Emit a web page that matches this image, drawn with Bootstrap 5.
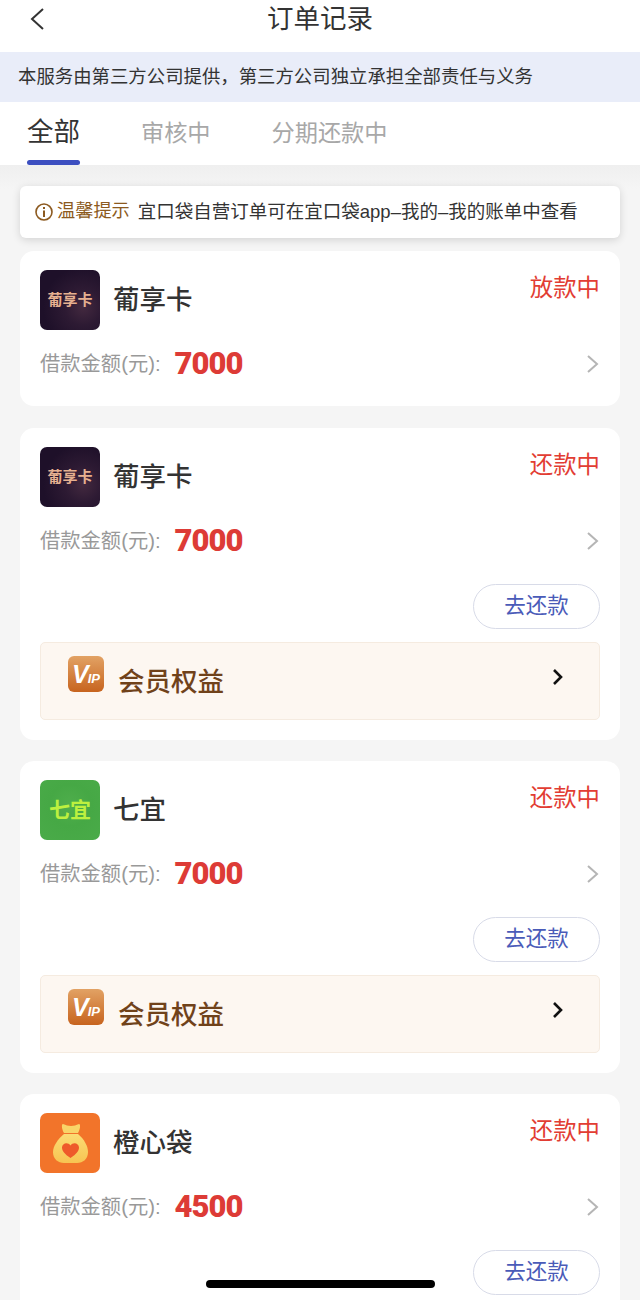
<!DOCTYPE html>
<html lang="zh-CN">
<head>
  <meta charset="UTF-8" />
  <meta name="viewport" content="width=device-width, initial-scale=1.0"/>
  <title>订单记录</title>
  <link href="https://cdn.jsdelivr.net/npm/bootstrap@5.3.3/dist/css/bootstrap.min.css" rel="stylesheet">
  <style>
    html, body { height: 1300px; overflow: hidden; }
    body { width: 640px; background: #f5f5f5; font-family: "Liberation Sans", "Noto Sans CJK SC", sans-serif; color: #333; position: relative; }
    .top-bar { height: 52px; background: #fff; }
    .top-bar h1 { font-size: 26.5px; font-weight: 400; margin: 0; line-height: 38px; color: #333; }
    .back-btn { left: 29px; top: 7px; line-height: 0; }
    .notice { height: 50px; background: #e9edf9; font-size: 18.4px; padding-left: 18px; color: #333; }
    .tab-bar { height: 63px; background: #fff; padding-left: 27px; gap: 61px; }
    .tab-item { font-size: 23.2px; color: #a8a8a8; line-height: 63px; height: 63px; position: relative; }
    .tab-item.on { font-size: 26.5px; color: #333; line-height: 60px; }
    .tab-item.on::after { content: ""; position: absolute; left: 0; right: 0; bottom: 0; height: 5px; border-radius: 3px; background: #3c4fc0; }
    .list-wrap { padding: 21px 20px 0; background: linear-gradient(#efefef, #f5f5f5 24px); }
    .tip-box { height: 52px; background: #fff; border-radius: 6px; box-shadow: 0 2px 8px rgba(0,0,0,.14); padding-left: 14px; margin-bottom: 13px; font-size: 18.5px; color: #333; }
    .tip-label { color: #8c5a20; margin: 0 8px 0 3px; font-size: 18.2px; }
    .order-item { background: #fff; border-radius: 14px; padding: 19px 20px 20px; margin-bottom: 21px; }
    .order-solo { padding-bottom: 25px; margin-bottom: 22px; }
    .logo-box { width: 60px; height: 60px; border-radius: 7px; flex: none; overflow: hidden; }
    .logo-pu { background: radial-gradient(circle at 72% 62%, #43293f 0, #2d1a33 32%, #1e1029 70%); color: #e6b090; font-size: 15px; font-weight: 700; }
    .logo-qi { background: radial-gradient(circle at 50% 42%, #4fae4c 0, #46a845 45%, #4aab49 100%); color: #bdf03f; font-size: 21px; font-weight: 700; }
    .logo-cheng { background: #f2742a; }
    .prod-name { font-size: 26.5px; font-weight: 500; margin-left: 13px; line-height: 60px; color: #333; }
    .state-txt { font-size: 23.4px; color: #e23d33; line-height: 36px; }
    .amount-row { height: 34px; margin-top: 17px; }
    .amount-label { font-size: 20.3px; color: #999; }
    .amount-num { font-family: Roboto, "Liberation Sans", sans-serif; font-size: 31px; font-weight: 900; color: #dd3b36; margin-left: 14px; line-height: 34px; letter-spacing: -1px; }
    .btn-repay { width: 127px; height: 45px; border: 1px solid #d8dbe8; border-radius: 23px; background: #fff; color: #4a5bb8; font-size: 21.5px; padding: 0; line-height: 41px; }
    .repay-row { margin-top: 26px; }
    .vip-box { height: 78px; margin-top: 13px; background: #fdf7f1; border: 1px solid #f5ebe0; border-radius: 5px; padding: 13px 0 0 27px; }
    .vip-badge { width: 36px; height: 36px; border-radius: 6px; background: linear-gradient(#e2a264, #c7641f); flex: none; color: #fff; font-family: "Liberation Sans", sans-serif; font-style: italic; font-weight: 700; padding-left: 4px; line-height: 36px; overflow: hidden; white-space: nowrap; }
    .vip-v { font-size: 25px; letter-spacing: -1px; }
    .vip-p { font-size: 13px; }
    .vip-name { font-size: 26.5px; font-weight: 500; color: #70421a; margin-left: 14px; line-height: 44px; margin-top: 4px; }
    .vip-arrow { margin: 11px 34px 0 auto; }
    .home-bar { position: absolute; left: 206px; top: 1280px; width: 229px; height: 8px; border-radius: 4px; background: #000; }
  </style>
</head>
<body>

<div class="top-bar position-relative text-center">
  <a class="back-btn position-absolute" href="#">
    <svg width="16" height="24" viewBox="0 0 16 24"><path d="M14 2 3 12l11 10" fill="none" stroke="#333" stroke-width="2"/></svg>
  </a>
  <h1>订单记录</h1>
</div>

<div class="notice d-flex align-items-center">本服务由第三方公司提供，第三方公司独立承担全部责任与义务</div>

<div class="tab-bar d-flex">
  <div class="tab-item on">全部</div>
  <div class="tab-item">审核中</div>
  <div class="tab-item">分期还款中</div>
</div>

<div class="list-wrap">
  <div class="tip-box d-flex align-items-center">
    <svg width="20" height="20" viewBox="0 0 20 20"><circle cx="10" cy="10" r="8" fill="none" stroke="#8c5a20" stroke-width="1.6"/><rect x="9" y="8.5" width="2" height="6.5" fill="#8c5a20"/><rect x="9" y="5" width="2" height="2" fill="#8c5a20"/></svg>
    <span class="tip-label">温馨提示</span>
    <span>宜口袋自营订单可在宜口袋app–我的–我的账单中查看</span>
  </div>

  <div class="order-item order-solo">
    <div class="d-flex justify-content-between">
      <div class="d-flex">
        <div class="logo-box logo-pu d-flex align-items-center justify-content-center">葡享卡</div>
        <div class="prod-name">葡享卡</div>
      </div>
      <div class="state-txt">放款中</div>
    </div>
    <div class="amount-row d-flex align-items-center">
      <span class="amount-label">借款金额(元):</span>
      <span class="amount-num">7000</span>
      <svg class="ms-auto" width="14" height="20" viewBox="0 0 14 20"><path d="m2 2 9 8-9 8" fill="none" stroke="#b5b5b5" stroke-width="2"/></svg>
    </div>
  </div>

  <div class="order-item">
    <div class="d-flex justify-content-between">
      <div class="d-flex">
        <div class="logo-box logo-pu d-flex align-items-center justify-content-center">葡享卡</div>
        <div class="prod-name">葡享卡</div>
      </div>
      <div class="state-txt">还款中</div>
    </div>
    <div class="amount-row d-flex align-items-center">
      <span class="amount-label">借款金额(元):</span>
      <span class="amount-num">7000</span>
      <svg class="ms-auto" width="14" height="20" viewBox="0 0 14 20"><path d="m2 2 9 8-9 8" fill="none" stroke="#b5b5b5" stroke-width="2"/></svg>
    </div>
    <div class="repay-row d-flex justify-content-end"><button type="button" class="btn btn-repay">去还款</button></div>
    <div class="vip-box d-flex">
      <div class="vip-badge"><span class="vip-v">V</span><span class="vip-p">IP</span></div>
      <div class="vip-name">会员权益</div>
      <svg class="vip-arrow" width="14" height="20" viewBox="0 0 14 20"><path d="m3 3 7 7-7 7" fill="none" stroke="#111" stroke-width="2.6"/></svg>
    </div>
  </div>

  <div class="order-item">
    <div class="d-flex justify-content-between">
      <div class="d-flex">
        <div class="logo-box logo-qi d-flex align-items-center justify-content-center">七宜</div>
        <div class="prod-name">七宜</div>
      </div>
      <div class="state-txt">还款中</div>
    </div>
    <div class="amount-row d-flex align-items-center">
      <span class="amount-label">借款金额(元):</span>
      <span class="amount-num">7000</span>
      <svg class="ms-auto" width="14" height="20" viewBox="0 0 14 20"><path d="m2 2 9 8-9 8" fill="none" stroke="#b5b5b5" stroke-width="2"/></svg>
    </div>
    <div class="repay-row d-flex justify-content-end"><button type="button" class="btn btn-repay">去还款</button></div>
    <div class="vip-box d-flex">
      <div class="vip-badge"><span class="vip-v">V</span><span class="vip-p">IP</span></div>
      <div class="vip-name">会员权益</div>
      <svg class="vip-arrow" width="14" height="20" viewBox="0 0 14 20"><path d="m3 3 7 7-7 7" fill="none" stroke="#111" stroke-width="2.6"/></svg>
    </div>
  </div>

  <div class="order-item">
    <div class="d-flex justify-content-between">
      <div class="d-flex">
        <div class="logo-box logo-cheng">
          <svg width="60" height="60" viewBox="0 0 60 60">
            <defs><linearGradient id="bagFill" x1="0" y1="0" x2="0" y2="1"><stop offset="0" stop-color="#fbdc74"/><stop offset="1" stop-color="#f7c452"/></linearGradient></defs>
            <path d="M23 11c3 1 5 2 8 2s5-1 8-2c2 0 1 6-1 9H24c-2-3-3-9-1-9z" fill="#f9d468"/>
            <path d="M24 21h14c6 5 10 12 10 18 0 7-5 11-11 11H24c-6 0-11-4-11-11 0-6 5-13 11-18z" fill="url(#bagFill)"/>
            <path d="M30.500 45c-6-4-8.500-7-8.500-10.500 0-4.500 6-6 8.500-2 2.500-4 8.500-2.500 8.500 2 0 3.500-2.500 6.500-8.500 10.500z" fill="#ee5a2a"/>
          </svg>
        </div>
        <div class="prod-name">橙心袋</div>
      </div>
      <div class="state-txt">还款中</div>
    </div>
    <div class="amount-row d-flex align-items-center">
      <span class="amount-label">借款金额(元):</span>
      <span class="amount-num">4500</span>
      <svg class="ms-auto" width="14" height="20" viewBox="0 0 14 20"><path d="m2 2 9 8-9 8" fill="none" stroke="#b5b5b5" stroke-width="2"/></svg>
    </div>
    <div class="repay-row d-flex justify-content-end"><button type="button" class="btn btn-repay">去还款</button></div>
  </div>
</div>

<div class="home-bar"></div>

<script src="https://cdn.jsdelivr.net/npm/bootstrap@5.3.3/dist/js/bootstrap.bundle.min.js"></script>
</body>
</html>
